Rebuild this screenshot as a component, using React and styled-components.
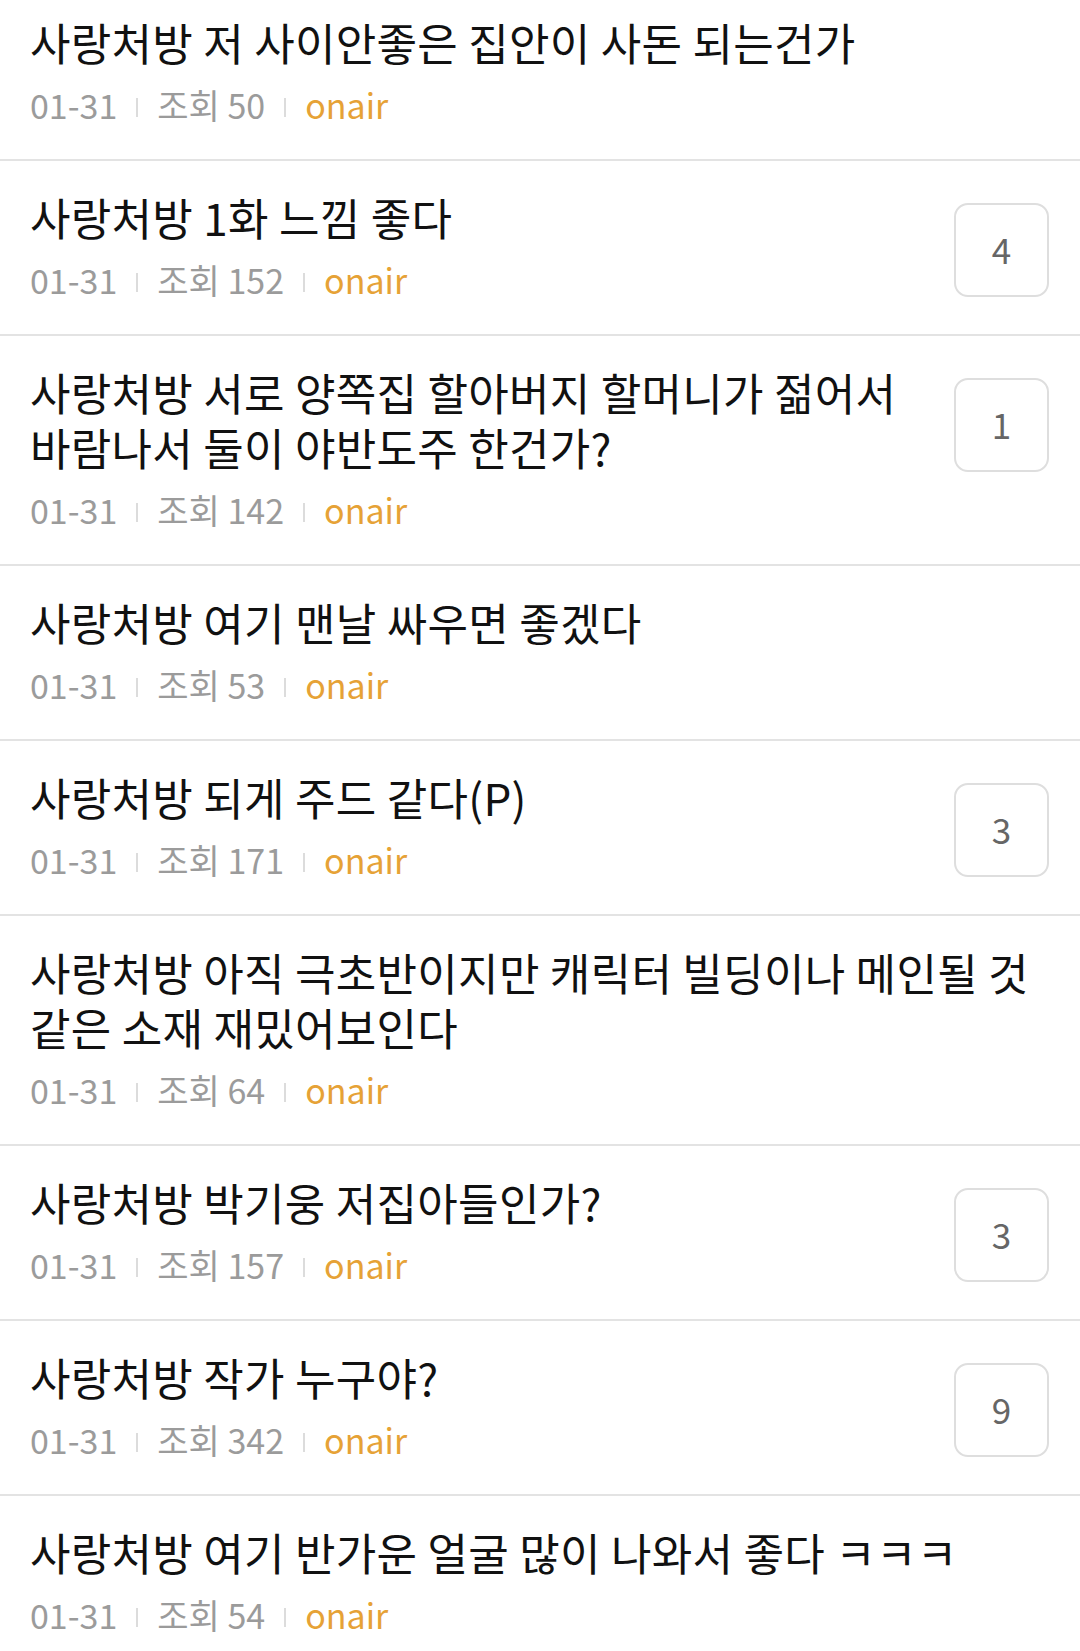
import styled, {createGlobalStyle} from "styled-components";

const GlobalStyle = createGlobalStyle`
  body {
    margin: 0;
    background: #fff;
    font-family: "Noto Sans CJK KR", "Noto Sans", sans-serif;
  }
`

const List = styled.ul`
  list-style: none;
  margin: -14px 0 0;
  padding: 0;
`

const Item = styled.li`
  display: flex;
  align-items: flex-start;
  gap: 12px;
  padding: 29px 31px 34px 30px;
  border-bottom: 2px solid #e3e3e3;
`

const Body = styled.div`
  flex: 1;
  min-width: 0;
`

const Title = styled.div`
  font-size: 44px;
  line-height: 55px;
  letter-spacing: 0.3px;
  color: #111;
  word-break: keep-all;
`

const Meta = styled.div`
  display: flex;
  align-items: center;
  margin-top: 15px;
  font-size: 34px;
  line-height: 40px;
  color: #9b9b9b;

  & .bar {
    width: 2px;
    height: 19px;
    margin: 4px 19px 0;
    background: #dcdcdc;
  }
`

const Board = styled.span`
  color: #e6a236;
`

const Count = styled.div`
  flex: none;
  width: 95px;
  height: 94px;
  margin-top: 13px;
  padding-bottom: 4px;
  box-sizing: border-box;
  display: flex;
  align-items: center;
  justify-content: center;
  border: 2px solid #dedede;
  border-radius: 14px;
  font-size: 35px;
  color: #666;
`

const posts = [
  {title: "사랑처방 저 사이안좋은 집안이 사돈 되는건가", views: 50},
  {title: "사랑처방 1화 느낌 좋다", views: 152, comments: 4},
  {title: "사랑처방 서로 양쪽집 할아버지 할머니가 젊어서 바람나서 둘이 야반도주 한건가?", views: 142, comments: 1},
  {title: "사랑처방 여기 맨날 싸우면 좋겠다", views: 53},
  {title: "사랑처방 되게 주드 같다(P)", views: 171, comments: 3},
  {title: "사랑처방 아직 극초반이지만 캐릭터 빌딩이나 메인될 것 같은 소재 재밌어보인다", views: 64},
  {title: "사랑처방 박기웅 저집아들인가?", views: 157, comments: 3},
  {title: "사랑처방 작가 누구야?", views: 342, comments: 9},
  {title: "사랑처방 여기 반가운 얼굴 많이 나와서 좋다 ㅋㅋㅋ", views: 54},
];

function App() {
  return (
    <>
      <GlobalStyle />
      <List>
        {posts.map((post, i) => (
          <Item key={i}>
            <Body>
              <Title>{post.title}</Title>
              <Meta>
                <span>01-31</span>
                <span className="bar" />
                <span>조회 {post.views}</span>
                <span className="bar" />
                <Board>onair</Board>
              </Meta>
            </Body>
            {post.comments && <Count>{post.comments}</Count>}
          </Item>
        ))}
      </List>
    </>
  )
}

export default App;
